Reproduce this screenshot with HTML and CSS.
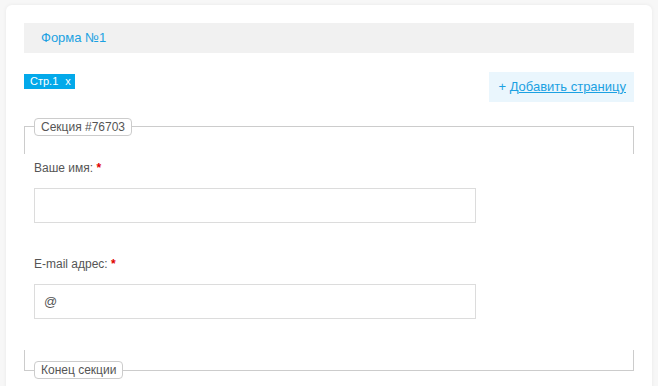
FILE: index.html
```html
<!DOCTYPE html>
<html lang="ru">
<head>
  <meta charset="UTF-8" />
  <meta name="viewport" content="width=device-width, initial-scale=1.0"/>
  <title>Форма №1</title>
  <link rel="stylesheet" href="styles.css">
</head>
<body>
  <div class="card">
    <div class="form-title">Форма №1</div>

    <div class="pages-row">
      <div class="page-tab">Стр.1 <span class="tab-close">x</span></div>
      <div class="add-page">+ <a href="#">Добавить страницу</a></div>
    </div>

    <div class="sec-top">
      <span class="sec-label">Секция #76703</span>
    </div>

    <div class="fields">
      <div class="field">
        <label class="field-label">Ваше имя: <span class="req">*</span></label>
        <input class="field-input" type="text" value="">
      </div>
      <div class="field">
        <label class="field-label">E-mail адрес: <span class="req">*</span></label>
        <input class="field-input" type="text" value="@">
      </div>
    </div>

    <div class="sec-bottom">
      <span class="sec-label sec-label-end">Конец секции</span>
    </div>
  </div>
</body>
</html>
```

FILE: styles.css
```css
body {
  margin: 0;
  font-family: "Liberation Sans", Arial, sans-serif;
  background: #f7f7f7;
  color: #555;
}
.card {
  margin: 5px 6px 0;
  padding: 18px 18px 30px;
  background: #ffffff;
  border-radius: 6px;
  box-shadow: 0 0 4px rgba(0,0,0,0.06);
}
.form-title {
  height: 30px;
  line-height: 30px;
  padding-left: 17px;
  background: #f1f1f1;
  color: #1ba1e2;
  font-size: 13px;
}
.pages-row {
  display: flex;
  justify-content: space-between;
  align-items: flex-start;
  margin-top: 19px;
}
.page-tab {
  margin-top: 2px;
  height: 15px;
  line-height: 15px;
  padding: 0 4px 0 6px;
  background: #03a9ea;
  color: #fff;
  font-size: 11px;
}
.tab-close {
  margin-left: 4px;
}
.add-page {
  height: 30px;
  line-height: 30px;
  padding: 0 8px 0 9px;
  background: #eaf6fd;
  color: #1ba1e2;
  font-size: 13px;
}
.add-page a {
  color: #1ba1e2;
  text-decoration: underline;
}
.sec-top {
  position: relative;
  margin-top: 24px;
  height: 27px;
  border: 1px solid #ccc;
  border-bottom: 0;
}
.sec-bottom {
  position: relative;
  margin-top: 31px;
  height: 20px;
  border: 1px solid #ccc;
  border-top: 0;
}
.sec-label {
  position: absolute;
  left: 9px;
  top: -9px;
  padding: 0 6px;
  line-height: 16px;
  font-size: 12px;
  color: #555;
  background: #fff;
  border: 1px solid #ccc;
  border-radius: 4px;
}
.sec-label-end {
  top: auto;
  bottom: -9px;
  padding: 0 6px;
}
.fields {
  padding: 6px 0 0 10px;
}
.field + .field {
  margin-top: 33px;
}
.field-label {
  display: block;
  line-height: 16px;
  font-size: 12px;
  margin-bottom: 12px;
}
.req {
  color: #e00000;
  font-weight: bold;
}
.field-input {
  display: block;
  box-sizing: border-box;
  width: 442px;
  height: 35px;
  margin: 0;
  padding: 0 9px;
  border: 1px solid #dcdcdc;
  font-family: "Liberation Sans", Arial, sans-serif;
  font-size: 13px;
  color: #555;
  background: #fff;
  outline: none;
}
```
